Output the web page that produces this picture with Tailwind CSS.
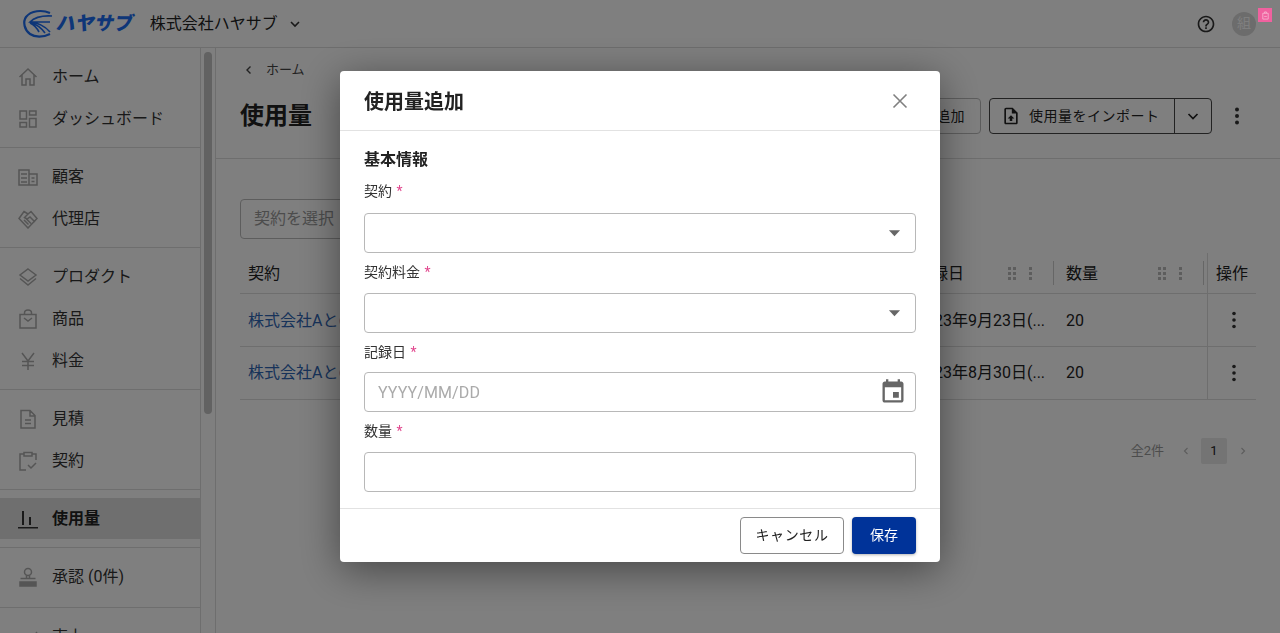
<!DOCTYPE html>
<html lang="ja">
<head>
  <meta charset="UTF-8">
  <title>使用量</title>
  <script src="https://cdn.jsdelivr.net/npm/@tailwindcss/browser@4"></script>
</head>
<body class="h-[633px] overflow-hidden bg-white text-[#222] [font-family:Roboto,'Noto_Sans_CJK_JP',sans-serif]">
  <!-- Top bar -->
  <header class="h-[48px] flex items-center border-b border-[#ddd] pl-[22px] pr-[24px]">
    <svg class="w-[36px] h-[30px]" viewBox="0 0 36 30" fill="none" stroke="#1c6cf0">
      <path d="M28 4C20 0.500 9 1.500 4 8C0.500 13 2.500 21 8 25C13 28.500 21 28.500 28 25" stroke-width="2.200"/>
      <path d="M30 7C22 6.500 13 8 8 13C14 13.500 22 16 28 23M8 13.500C14 15 19 18.500 23 24M8 14C12 16 15 19 17 23M8 13L28 13" stroke-width="1.700"/>
    </svg>
    <span class="ml-[-1px] text-[19px] leading-none font-black text-[#1c6cf0] [transform:skewX(-12deg)] tracking-[0.2px]">ハヤサブ</span>
    <span class="ml-[16px] text-[16px]">株式会社ハヤサブ</span>
    <svg class="ml-[10px] w-[14px] h-[14px]" viewBox="0 0 14 14" fill="none" stroke="#333" stroke-width="1.600"><path d="M3 5l4 4 4-4"/></svg>
    <svg class="ml-auto w-[20px] h-[20px]" viewBox="0 0 24 24" fill="#333"><path d="M11 18h2v-2h-2v2zm1-16C6.480 2 2 6.480 2 12s4.480 10 10 10 10-4.480 10-10S17.520 2 12 2zm0 18c-4.410 0-8-3.590-8-8s3.590-8 8-8 8 3.590 8 8-3.590 8-8 8zm0-14c-2.210 0-4 1.790-4 4h2c0-1.100.9-2 2-2s2 .9 2 2c0 2-3 1.750-3 5h2c0-2.250 3-2.500 3-5 0-2.210-1.790-4-4-4z"/></svg>
    <div class="ml-[16px] w-[24px] h-[24px] rounded-full bg-[#d8d8d8] text-white text-[14px] flex items-center justify-center">組</div>
  </header>

  <div class="flex h-[585px]">
    <!-- Sidebar -->
    <aside class="w-[201px] shrink-0 border-r border-[#ddd] text-[16px] text-[#333]">
      <div class="pt-[8px] pb-[7px] border-b border-[#ddd]">
        <a class="h-[42px] flex items-center pl-[18px] gap-[14px]">
          <svg class="w-[20px] h-[20px]" viewBox="0 0 20 20" fill="none" stroke="#aaa" stroke-width="1.500"><path d="M1.500 10L10 2l8.500 8M4 8v10h4v-6h4v6h4V8"/></svg>ホーム</a>
        <a class="h-[42px] flex items-center pl-[18px] gap-[14px]">
          <svg class="w-[20px] h-[20px]" viewBox="0 0 20 20" fill="none" stroke="#aaa" stroke-width="1.500"><path d="M2 2h6.500v8H2zM11.500 2H18v4h-6.500zM2 13.500h6.500V18H2zM11.500 9.500H18V18h-6.500z"/></svg>ダッシュボード</a>
      </div>
      <div class="pt-[8px] pb-[7px] border-b border-[#ddd]">
        <a class="h-[42px] flex items-center pl-[18px] gap-[14px]">
          <svg class="w-[20px] h-[20px]" viewBox="0 0 20 20" fill="none" stroke="#aaa" stroke-width="1.500"><path d="M1 3h10v15H1zM11 7h8v11h-8zM3 7h6M3 11h6M3 15h6M13.500 11h3M13.500 14.500h3"/></svg>顧客</a>
        <a class="h-[42px] flex items-center pl-[18px] gap-[14px]">
          <svg class="w-[20px] h-[20px]" viewBox="0 0 20 20" fill="none" stroke="#aaa" stroke-width="1.500"><path d="M6 2.500L10 5l3-2.500 6 7-9 9.500-9-9.500zM10 5L6.500 8.500 9 10l3-2 5 5M6 11l4.500 4.500M8 9.500l5 5"/></svg>代理店</a>
      </div>
      <div class="pt-[8px] pb-[7px] border-b border-[#ddd]">
        <a class="h-[42px] flex items-center pl-[18px] gap-[14px]">
          <svg class="w-[20px] h-[20px]" viewBox="0 0 20 20" fill="none" stroke="#aaa" stroke-width="1.500"><path d="M10 2l8 6-8 6-8-6zM2 11.500l8 6.500 8-6.500"/></svg>プロダクト</a>
        <a class="h-[42px] flex items-center pl-[18px] gap-[14px]">
          <svg class="w-[20px] h-[20px]" viewBox="0 0 20 20" fill="none" stroke="#aaa" stroke-width="1.500"><path d="M2 5.500h16V19H2zM6.500 5.500V4a3.500 3 0 017 0v1.500M6 9l4 3 4-3"/></svg>商品</a>
        <a class="h-[42px] flex items-center pl-[18px] gap-[14px]">
          <svg class="w-[20px] h-[20px]" viewBox="0 0 20 20" fill="none" stroke="#aaa" stroke-width="1.500"><path d="M4 2l6 8 6-8M10 10v9M4 10.500h12M4 14.500h12"/></svg>料金</a>
      </div>
      <div class="pt-[8px] pb-[7px] border-b border-[#ddd]">
        <a class="h-[42px] flex items-center pl-[18px] gap-[14px]">
          <svg class="w-[20px] h-[20px]" viewBox="0 0 20 20" fill="none" stroke="#aaa" stroke-width="1.500"><path d="M3 1.500h9l5 5V19H3zM12 1.500V7h5M7 11h6M7 14.500h6"/></svg>見積</a>
        <a class="h-[42px] flex items-center pl-[18px] gap-[14px]">
          <svg class="w-[20px] h-[20px]" viewBox="0 0 20 20" fill="none" stroke="#aaa" stroke-width="1.500"><path d="M6 3H2v16h6M14 3h4v6M6 1.500h8V5H6zM10 14l3 3 5-5"/></svg>契約</a>
      </div>
      <div class="pt-[8px] pb-[8px] border-b border-[#ddd]">
        <a class="h-[41px] flex items-center pl-[18px] gap-[14px] bg-[#dfdfdf] font-bold text-[#222]">
          <svg class="w-[20px] h-[20px]" viewBox="0 0 20 20" fill="#333"><path d="M4 2h2v14H4zM11 8h2v8h-2zM0 18h20v1.500H0z"/></svg>使用量</a>
      </div>
      <div class="pt-[8px] pb-[9px] border-b border-[#ddd]">
        <a class="h-[42px] flex items-center pl-[18px] gap-[14px]">
          <svg class="w-[20px] h-[20px]" viewBox="0 0 20 20" fill="none" stroke="#aaa" stroke-width="1.500"><circle cx="10" cy="5" r="3.500"/><path d="M8.500 8.500v3M11.500 8.500v3M2.500 11.500h15"/><path d="M2 15h16v4H2z" fill="#aaa"/></svg>承認 (0件)</a>
      </div>
      <div class="pt-[8px]">
        <a class="h-[42px] flex items-center pl-[18px] gap-[14px]">
          <svg class="w-[20px] h-[20px]" viewBox="0 0 20 20" fill="none" stroke="#aaa" stroke-width="1.500"><path d="M2 18l6-7 4 3 7-9"/></svg>売上</a>
      </div>
    </aside>

    <!-- Sidebar scrollbar -->
    <div class="w-[15px] shrink-0 border-r border-[#ddd] pt-[4px] pl-[3px]">
      <div class="w-[8px] h-[362px] rounded-full bg-[#c4c4c4]"></div>
    </div>

    <!-- Main -->
    <main class="flex-1 min-w-0">
      <div class="h-[111px] border-b border-[#ddd] pl-[24px] pr-[33px]">
        <div class="h-[43px] flex items-center text-[13px] text-[#444]">
          <svg class="ml-[4px] w-[10px] h-[10px] mr-[12px]" viewBox="0 0 10 10" fill="none" stroke="#444" stroke-width="1.400"><path d="M6.500 1.500L3 5l3.500 3.500"/></svg>ホーム
        </div>
        <div class="flex items-center h-[36px] mt-[7px]">
          <h1 class="text-[24px] font-bold">使用量</h1>
          <button class="ml-auto h-[36px] px-[15px] border border-[#bbb] rounded-[4px] text-[14px] tracking-[0.4px]">使用量を追加</button>
          <div class="ml-[8px] h-[36px] flex border border-[#444] rounded-[4px] text-[14px] tracking-[0.5px]">
            <div class="w-[185px] flex items-center pl-[11px] gap-[8px] border-r border-[#444]">
              <svg class="w-[20px] h-[20px]" viewBox="0 0 24 24" fill="#222"><path d="M14 2H6c-1.100 0-2 .9-2 2v16c0 1.100.9 2 2 2h12c1.100 0 2-.9 2-2V8l-6-6zm4 18H6V4h7v5h5v11zM8 15h2.500v3h3v-3H16l-4-4z"/></svg>使用量をインポート
            </div>
            <div class="w-[36px] flex items-center justify-center">
              <svg class="w-[14px] h-[14px]" viewBox="0 0 14 14" fill="none" stroke="#222" stroke-width="1.700"><path d="M2.500 5L7 9.500 11.500 5"/></svg>
            </div>
          </div>
          <svg class="ml-[15px] w-[20px] h-[20px]" viewBox="0 0 20 20" fill="#333"><circle cx="10" cy="3.500" r="2"/><circle cx="10" cy="10" r="2"/><circle cx="10" cy="16.500" r="2"/></svg>
        </div>
      </div>

      <div class="pl-[24px] pr-[24px] pt-[40px]">
        <div class="w-[300px] h-[40px] border border-[#bbb] rounded-[4px] flex items-center pl-[13px] text-[16px] text-[#999]">契約を選択</div>

        <!-- Table -->
        <div class="mt-[14px] text-[16px]">
          <div class="h-[41px] flex items-center border-b border-[#ddd]">
            <div class="w-[668px] pl-[8px] pt-[2px]">契約</div>
            <div class="w-[146px] pl-[8px] flex items-center">
              <span class="pt-[2px]">記録日</span>
              <svg class="ml-auto w-[30px] h-[14px]" viewBox="0 0 30 14" fill="#bbb"><path d="M0 1h3v3H0zM5 1h3v3H5zM0 6h3v3H0zM5 6h3v3H5zM0 11h3v3H0zM5 11h3v3H5zM21 1h3v3h-3zM21 6h3v3h-3zM21 11h3v3h-3z"/></svg>
              <span class="ml-[15px] w-px h-[24px] bg-[#ccc]"></span>
            </div>
            <div class="w-[150px] pl-[12px] flex items-center">
              <span class="pt-[2px]">数量</span>
              <svg class="ml-auto w-[30px] h-[14px]" viewBox="0 0 30 14" fill="#bbb"><path d="M0 1h3v3H0zM5 1h3v3H5zM0 6h3v3H0zM5 6h3v3H5zM0 11h3v3H0zM5 11h3v3H5zM21 1h3v3h-3zM21 6h3v3h-3zM21 11h3v3h-3z"/></svg>
              <span class="ml-[15px] w-px h-[24px] bg-[#ccc]"></span>
            </div>
            <div class="flex-1 h-full border-l border-[#ddd] ml-[3px] pl-[8px] pt-[2px] flex items-center">操作</div>
          </div>
          <div class="h-[53px] flex items-center border-b border-[#ddd]">
            <div class="w-[668px] pl-[8px] pt-[2px] text-[#2f66b4]">株式会社Aとの契約</div>
            <div class="w-[146px] pl-[8px] pt-[2px]">2023年9月23日(...</div>
            <div class="w-[153px] pl-[12px] pt-[2px]">20</div>
            <div class="flex-1 h-full border-l border-[#ddd] pl-[3px] flex items-center justify-center">
              <svg class="w-[20px] h-[20px]" viewBox="0 0 20 20" fill="#333"><circle cx="10" cy="3.500" r="1.800"/><circle cx="10" cy="10" r="1.800"/><circle cx="10" cy="16.500" r="1.800"/></svg>
            </div>
          </div>
          <div class="h-[53px] flex items-center border-b border-[#ddd]">
            <div class="w-[668px] pl-[8px] text-[#2f66b4]">株式会社Aとの契約</div>
            <div class="w-[146px] pl-[8px]">2023年8月30日(...</div>
            <div class="w-[153px] pl-[12px]">20</div>
            <div class="flex-1 h-full border-l border-[#ddd] pl-[3px] flex items-center justify-center">
              <svg class="w-[20px] h-[20px]" viewBox="0 0 20 20" fill="#333"><circle cx="10" cy="3.500" r="1.800"/><circle cx="10" cy="10" r="1.800"/><circle cx="10" cy="16.500" r="1.800"/></svg>
            </div>
          </div>
        </div>

        <!-- Pagination -->
        <div class="mt-[38px] flex items-center justify-end text-[13px] text-[#999]">
          <span>全2件</span>
          <svg class="ml-[17px] w-[10px] h-[10px]" viewBox="0 0 10 10" fill="none" stroke="#bbb" stroke-width="1.200"><path d="M6.500 2L3.500 5l3 3"/></svg>
          <span class="ml-[10px] w-[26px] h-[26px] rounded-[2px] bg-[#e8e8e8] text-[#222] flex items-center justify-center">1</span>
          <svg class="ml-[11px] mr-[8px] w-[10px] h-[10px]" viewBox="0 0 10 10" fill="none" stroke="#bbb" stroke-width="1.200"><path d="M3.500 2l3 3-3 3"/></svg>
        </div>
      </div>
    </main>
  </div>

  <!-- Modal backdrop -->
  <div class="fixed inset-0 bg-black/50"></div>

  <!-- Notice badge sits above the backdrop -->
  <div class="fixed top-[8px] left-[1258px] w-[14px] h-[14px] bg-[#f0619f] flex items-center justify-center">
    <svg class="w-[9px] h-[9px]" viewBox="0 0 10 10" fill="none" stroke="#f9b8d4" stroke-width="0.900"><path d="M2 2.500h6V9H2zM4 2.500V1h2v1.500M3.500 6h3"/></svg>
  </div>

  <!-- Dialog -->
  <div class="fixed top-[71px] left-[340px] w-[600px] h-[491px] bg-white rounded-[4px] shadow-[0_8px_40px_rgba(0,0,0,0.45)] flex flex-col">
    <div class="h-[60px] shrink-0 border-b border-[#e2e2e2] flex items-center justify-between pl-[24px] pr-[30px]">
      <h2 class="text-[20px] font-bold pt-[2px]">使用量追加</h2>
      <svg class="w-[20px] h-[20px]" viewBox="0 0 20 20" fill="none" stroke="#808080" stroke-width="1.600"><path d="M3.500 3.500l13 13M16.500 3.500l-13 13"/></svg>
    </div>
    <div class="flex-1 px-[24px] pt-[17px]">
      <h3 class="text-[16px] font-bold leading-[24px]">基本情報</h3>
      <label class="block mt-[9px] text-[14px] leading-[20px] text-[#333]">契約 <span class="ml-px text-[#e2478e]">*</span></label>
      <div class="mt-[12px] h-[40px] border border-[#b8b8b8] rounded-[4px] flex items-center justify-end pr-[14px]">
        <svg class="w-[13px] h-[8px]" viewBox="0 0 14 8" fill="#666"><path d="M1 1h12L7 7.500z"/></svg>
      </div>
      <label class="block mt-[9px] text-[14px] leading-[20px] text-[#333]">契約料金 <span class="ml-px text-[#e2478e]">*</span></label>
      <div class="mt-[11px] h-[40px] border border-[#b8b8b8] rounded-[4px] flex items-center justify-end pr-[14px]">
        <svg class="w-[13px] h-[8px]" viewBox="0 0 14 8" fill="#666"><path d="M1 1h12L7 7.500z"/></svg>
      </div>
      <label class="block mt-[9px] text-[14px] leading-[20px] text-[#333]">記録日 <span class="ml-px text-[#e2478e]">*</span></label>
      <div class="mt-[10px] h-[40px] border border-[#b8b8b8] rounded-[4px] flex items-center justify-between pl-[13px] pr-[8px]">
        <span class="pt-[2px] text-[16px] tracking-[0.1px] text-[#aaa]">YYYY/MM/DD</span>
        <svg class="w-[28px] h-[28px]" viewBox="0 0 24 24" fill="#666"><path d="M17 12h-5v5h5v-5zM16 1v2H8V1H6v2H5c-1.110 0-1.990.9-1.990 2L3 19c0 1.100.89 2 2 2h14c1.100 0 2-.9 2-2V5c0-1.100-.9-2-2-2h-1V1h-2zm3 18H5V8h14v11z"/></svg>
      </div>
      <label class="block mt-[9px] text-[14px] leading-[20px] text-[#333]">数量 <span class="ml-px text-[#e2478e]">*</span></label>
      <div class="mt-[11px] h-[40px] border border-[#b8b8b8] rounded-[4px]"></div>
    </div>
    <div class="h-[54px] shrink-0 border-t border-[#e2e2e2] flex items-center justify-end gap-[8px] px-[24px]">
      <button class="w-[104px] h-[37px] border border-[#8a8a8a] rounded-[4px] text-[14px] tracking-[0.6px] text-[#222]">キャンセル</button>
      <button class="w-[64px] h-[37px] rounded-[4px] bg-[#003399] text-white text-[14px] shadow-[0_1px_3px_rgba(0,0,0,0.3)]">保存</button>
    </div>
  </div>
</body>
</html>
